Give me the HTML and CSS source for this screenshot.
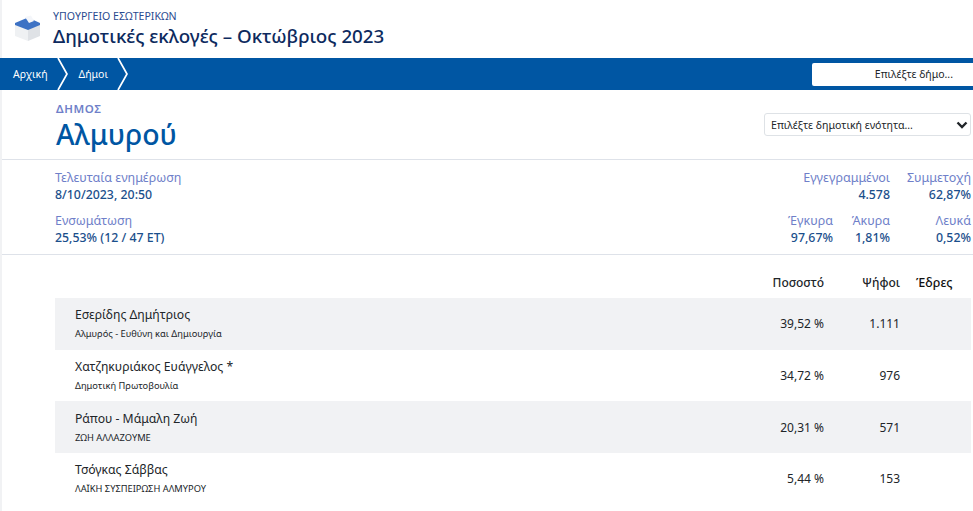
FILE: index.html
```html
<!DOCTYPE html>
<html lang="el">
<head>
<meta charset="utf-8">
<title>Δημοτικές εκλογές – Οκτώβριος 2023</title>
<link rel="stylesheet" href="styles.css">
</head>
<body>
<div class="page">
  <header class="masthead">
    <svg class="logo" width="26" height="26" viewBox="0 0 26 26" aria-hidden="true">
      <path d="M0 9 L13 14 L13 26 L0 21 Z" fill="#eff1f3"/>
      <path d="M13 14 L25 9 V21 L13 26 Z" fill="#dfe2e6"/>
      <path d="M0 8 L13 2.5 L25 8 V10 L13 15 L0 10 Z" fill="#3d72c4"/>
      <path d="M10 2 L16 0.5 L19 6 L14 8 Z" fill="#f4f6fa"/>
    </svg>
    <div class="titles">
      <div class="ministry">ΥΠΟΥΡΓΕΙΟ ΕΣΩΤΕΡΙΚΩΝ</div>
      <div class="election">Δημοτικές εκλογές – Οκτώβριος 2023</div>
    </div>
  </header>
  <nav class="navbar">
    <div class="crumbs">
      <a class="crumb">Αρχική</a>
      <svg class="chev" width="12" height="32" viewBox="0 0 12 32" aria-hidden="true"><path d="M1 0 L10 16 L1 32" fill="none" stroke="#fff" stroke-width="1.7"/></svg>
      <a class="crumb">Δήμοι</a>
      <svg class="chev" width="12" height="32" viewBox="0 0 12 32" aria-hidden="true"><path d="M1 0 L10 16 L1 32" fill="none" stroke="#fff" stroke-width="1.7"/></svg>
    </div>
    <div class="muni-search">Επιλέξτε δήμο...</div>
  </nav>
  <section class="heading">
    <div class="heading-text">
      <div class="kicker">ΔΗΜΟΣ</div>
      <h1 class="muni">Αλμυρού</h1>
    </div>
    <div class="unit-select">
      <span>Επιλέξτε δημοτική ενότητα...</span>
      <svg width="12" height="8" viewBox="0 0 12 8" aria-hidden="true"><path d="M1.5 1.5 L6 6 L10.5 1.5" fill="none" stroke="#212529" stroke-width="2.4"/></svg>
    </div>
  </section>
  <section class="stats">
    <div class="stats-left">
      <div class="stat"><div class="label">Τελευταία ενημέρωση</div><div class="value">8/10/2023, 20:50</div></div>
      <div class="stat"><div class="label">Ενσωμάτωση</div><div class="value">25,53% (12 / 47 ΕΤ)</div></div>
    </div>
    <div class="stats-right">
      <div class="stat-row">
        <div class="stat right w-reg"><div class="label">Εγγεγραμμένοι</div><div class="value">4.578</div></div>
        <div class="stat right w-part"><div class="label">Συμμετοχή</div><div class="value">62,87%</div></div>
      </div>
      <div class="stat-row">
        <div class="stat right w-valid"><div class="label">Έγκυρα</div><div class="value">97,67%</div></div>
        <div class="stat right w-invalid"><div class="label">Άκυρα</div><div class="value">1,81%</div></div>
        <div class="stat right w-part"><div class="label">Λευκά</div><div class="value">0,52%</div></div>
      </div>
    </div>
  </section>
  <section class="results">
    <div class="row head">
      <div class="cand"></div>
      <div class="pct">Ποσοστό</div>
      <div class="votes">Ψήφοι</div>
      <div class="seats">Έδρες</div>
    </div>
    <div class="row body shade">
      <div class="cand"><div class="name">Εσερίδης Δημήτριος</div><div class="party">Αλμυρός - Ευθύνη και Δημιουργία</div></div>
      <div class="pct">39,52 %</div><div class="votes">1.111</div><div class="seats"></div>
    </div>
    <div class="row body">
      <div class="cand"><div class="name">Χατζηκυριάκος Ευάγγελος *</div><div class="party">Δημοτική Πρωτοβουλία</div></div>
      <div class="pct">34,72 %</div><div class="votes">976</div><div class="seats"></div>
    </div>
    <div class="row body shade">
      <div class="cand"><div class="name">Ράπου - Μάμαλη Ζωή</div><div class="party">ΖΩΗ ΑΛΛΑΖΟΥΜΕ</div></div>
      <div class="pct">20,31 %</div><div class="votes">571</div><div class="seats"></div>
    </div>
    <div class="row body">
      <div class="cand"><div class="name">Τσόγκας Σάββας</div><div class="party">ΛΑΪΚΗ ΣΥΣΠΕΙΡΩΣΗ ΑΛΜΥΡΟΥ</div></div>
      <div class="pct">5,44 %</div><div class="votes">153</div><div class="seats"></div>
    </div>
  </section>
</div>
</body>
</html>
```
FILE: styles.css
```css
* { box-sizing: border-box; }
html, body { margin: 0; height: 100%; background: #fff; overflow: hidden; }
body { font-family: "Noto Sans", "Open Sans", sans-serif; color: #212529; }
.page { border-left: 2px solid #f1f2f4; min-height: 511px; }

.masthead { height: 58px; display: flex; align-items: flex-start; padding: 15px 0 0 13px; gap: 12px; }
.logo { flex: none; }
.titles { margin-top: -6px; }
.ministry { font-size: 10.6px; line-height: 14px; color: #2a4a8f; }
.election { font-size: 18.75px; line-height: 24px; font-weight: 500; color: #0d2a5e; margin-top: 1px; }

.navbar { height: 32px; background: #0056a3; display: flex; justify-content: space-between; align-items: center; color: #fff; margin-left: -2px; }
.crumbs { display: flex; align-items: center; height: 100%; padding-left: 13px; }
.crumb { font-size: 10.5px; color: #fff; }
.chev { flex: none; display: block; }
.crumb + .chev { margin-left: 9px; margin-right: 10px; }
.muni-search { width: 161px; height: 23px; background: #fff; border-radius: 2px 0 0 2px; color: #212529; font-size: 10.5px; line-height: 23px; text-align: right; padding-right: 20px; }

.heading { height: 70px; border-bottom: 1px solid #dee2e9; display: flex; justify-content: space-between; padding: 12px 2px 0 54px; }
.kicker { font-size: 11.5px; line-height: 14px; font-weight: 600; letter-spacing: .6px; color: #6f7fc9; }
.muni { margin: 0; font-size: 28.4px; line-height: 36px; font-weight: 500; color: #0056a3; }
.unit-select { width: 207px; height: 23px; margin-top: 11px; border: 1px solid #dee2e6; border-radius: 3px; display: flex; justify-content: space-between; align-items: center; padding: 0 2px 0 6px; font-size: 10.6px; color: #212529; }

.stats { height: 95px; border-bottom: 1px solid #dee2e9; display: flex; justify-content: space-between; padding: 9px 2px 0 53px; }
.stat { height: 42.5px; }
.label { font-size: 12.5px; line-height: 17px; color: #6f7fc9; }
.value { font-size: 12.35px; line-height: 17px; font-weight: 500; color: #1b4f8c; }
.stat-row { display: flex; justify-content: flex-end; height: 42.5px; }
.right { text-align: right; }
.w-reg { width: 100px; }
.w-part { width: 81px; }
.w-valid { width: 70px; }
.w-invalid { width: 57px; }
.stats-right { width: 300px; }

.results { padding: 0 2px 0 53px; }
.row { display: flex; align-items: center; }
.head { height: 43px; padding-top: 11px; font-size: 12.6px; font-weight: 500; color: #111; }
.body { height: 51.7px; }
.shade { background: #f1f2f4; }
.cand { flex: 1; padding: 0 0 1px 20px; }
.name { font-size: 12.2px; line-height: 18px; color: #212529; }
.party { font-size: 9.3px; line-height: 12px; margin-top: 4px; color: #212529; }
.pct { width: 76px; text-align: right; font-size: 12px; color: #212529; }
.votes { width: 76px; text-align: right; font-size: 12px; color: #212529; }
.seats { width: 71px; padding-left: 16px; }
```
